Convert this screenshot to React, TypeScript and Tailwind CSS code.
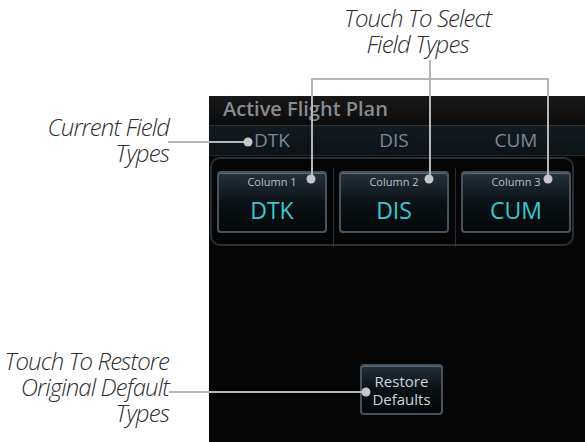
import React from "react";

const labelFont = { fontFamily: '"Open Sans", "Noto Sans", sans-serif' };

function ColumnButton({ col, value }: { col: string; value: string }) {
  return (
    <div className="w-[110px] h-[62px] rounded-[4px] border-2 border-[#46535d] bg-gradient-to-b from-[#25323c] via-[#0b1216] to-[#05080a] flex flex-col items-center shadow-[inset_0_1px_0_#5f6e78]">
      <div className="mt-[2px] text-[11px] leading-[14px] text-[#b7c0c7]">{col}</div>
      <div className="mt-[7px] text-[23px] leading-[28px] font-medium text-[#3fc6d0]">{value}</div>
    </div>
  );
}

function Sep() {
  return (
    <div className="w-[12px] flex justify-center self-stretch">
      <div className="w-px bg-[#2a2f33] -mt-[3px] -mb-[3px]" />
    </div>
  );
}

export default function App() {
  return (
    <div className="relative w-[585px] h-[442px] bg-white overflow-hidden" style={labelFont}>
      <div className="flex h-full">
        {/* left annotations */}
        <div className="w-[209px] shrink-0 flex flex-col items-end pr-[40px] font-light italic text-[#2e2e2e] text-[24px] leading-[26px] text-right tracking-[-0.9px] whitespace-nowrap">
          <div className="mt-[114px]">
            Current Field
            <br />
            Types
          </div>
          <div className="mt-auto mb-[16px]">
            Touch To Restore
            <br />
            Original Default
            <br />
            Types
          </div>
        </div>

        {/* right side */}
        <div className="flex-1 flex flex-col">
          <div className="h-[96px] shrink-0 pl-[135px]">
            <div className="mt-[5px] w-fit text-center font-light italic text-[#2e2e2e] text-[24px] leading-[26px] tracking-[-0.9px] whitespace-nowrap">
              Touch To Select
              <br />
              Field Types
            </div>
          </div>

          {/* screen */}
          <div className="flex-1 bg-[#050505] flex flex-col">
            <div className="h-[30px] shrink-0 bg-gradient-to-b from-[#181818] to-[#0c0c0c] border-b border-[#2c3135] pl-[14px] flex items-center">
              <span className="text-[20px] leading-[24px] font-semibold text-[#878b8f] -mt-[3px]">Active Flight Plan</span>
            </div>
            <div className="h-[30px] shrink-0 bg-gradient-to-b from-[#121b21] to-[#0d1317] border-b border-[#1f272d] flex pl-[8px]">
              <div className="w-[110px] flex items-center justify-center text-[19px] font-medium text-[#7b8896]">DTK</div>
              <div className="w-[12px]" />
              <div className="w-[110px] flex items-center justify-center text-[19px] font-medium text-[#7b8896]">DIS</div>
              <div className="w-[12px]" />
              <div className="w-[110px] flex items-center justify-center text-[19px] font-medium text-[#7b8896]">CUM</div>
            </div>

            <div className="mt-[1px] ml-[1px] w-[364px] h-[89px] rounded-[10px] border-2 border-[#2a2e32] flex items-start pt-[12px] pl-[5px]">
              <ColumnButton col="Column 1" value="DTK" />
              <Sep />
              <ColumnButton col="Column 2" value="DIS" />
              <Sep />
              <ColumnButton col="Column 3" value="CUM" />
            </div>

            <div className="mt-[118px] ml-[151px] w-[83px] h-[51px] rounded-[4px] border-2 border-[#46535d] bg-gradient-to-b from-[#22303a] via-[#0a1014] to-[#05080a] shadow-[inset_0_1px_0_#5f6e78] flex flex-col items-center justify-center text-[15px] leading-[18px] text-[#c9d5dd] text-center">
              Restore
              <br />
              Defaults
            </div>
          </div>
        </div>
      </div>

      {/* callout leader lines */}
      <svg className="absolute inset-0 pointer-events-none" width="585" height="442">
        <g stroke="#b6b6ba" strokeWidth="2" fill="none">
          <path d="M312 179 V79 H548 V179" />
          <path d="M430 60 V179" />
          <path d="M168 142 H248" />
          <path d="M169 392 H366" />
        </g>
        <g fill="#c6c6ca">
          <circle cx="248" cy="142" r="4.5" />
          <circle cx="311" cy="179" r="4.5" />
          <circle cx="429" cy="179" r="4.5" />
          <circle cx="548" cy="179" r="4.5" />
          <circle cx="366" cy="392" r="4.5" />
        </g>
      </svg>
    </div>
  );
}
